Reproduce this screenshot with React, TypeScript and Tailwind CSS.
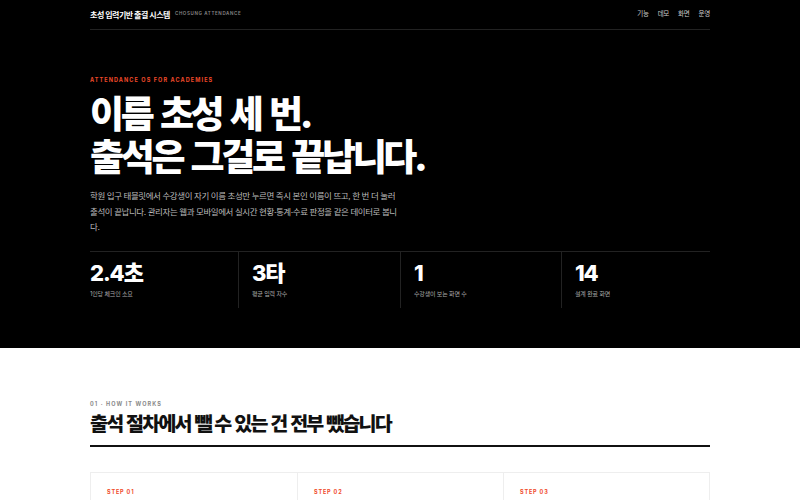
const stats = [
  { value: '2.4초', label: '1인당 체크인 소요' },
  { value: '3타', label: '평균 입력 자수' },
  { value: '1', label: '수강생이 보는 화면 수' },
  { value: '14', label: '설계 완료 화면' },
];

const steps = ['STEP 01', 'STEP 02', 'STEP 03'];

const nav = ['기능', '데모', '화면', '운영'];

export default function App() {
  return (
    <div className="min-h-screen bg-white font-['Inter','Noto_Sans_CJK_KR',sans-serif]">
      {/* Hero */}
      <section className="bg-black pb-[40px]">
        <div className="w-[620px] mx-auto">
          <header className="flex items-center justify-between h-[30px] border-b border-[#222]">
            <div className="flex items-center gap-[5px]">
              <span className="text-[8px] font-bold text-white tracking-[-0.06em]">초성 입력기반 출결 시스템</span>
              <span className="text-[4.5px] font-semibold text-[#888] tracking-[0.14em]">CHOSUNG ATTENDANCE</span>
            </div>
            <nav className="flex items-center gap-[9px]">
              {nav.map(item => (
                <span key={item} className="text-[6.5px] text-[#ccc] tracking-[-0.04em]">{item}</span>
              ))}
            </nav>
          </header>

          <p className="mt-[46px] text-[5.5px] leading-[8px] font-bold tracking-[0.2em] text-[#f04a2a]">
            ATTENDANCE OS FOR ACADEMIES
          </p>
          <h1 className="mt-[9px] text-[37px] leading-[43px] font-black text-white tracking-[-0.09em] [word-spacing:0.12em]">
            이름 초성 세 번.
            <br />
            출석은 그걸로 끝납니다.
          </h1>
          <p className="mt-[10px] w-[308px] text-[8.5px] leading-[15.5px] text-[#bbbbbb] tracking-[-0.05em]">
            학원 입구 태블릿에서 수강생이 자기 이름 초성만 누르면 즉시 본인 이름이 뜨고, 한 번 더 눌러 출석이 끝납니다. 관리자는 웹과 모바일에서 실시간 현황·통계·수료 판정을 같은 데이터로 봅니다.
          </p>

          <div className="mt-[15px] grid grid-cols-[148px_162px_161px_149px] border-t border-[#222]">
            {stats.map((s, i) => (
              <div
                key={s.value}
                className={`h-[56px] pt-[9px] ${i === 0 ? '' : 'pl-[13px] border-l border-[#222]'}`}
              >
                <div className="text-[22px] leading-[24px] font-extrabold text-white tracking-[-0.05em]">{s.value}</div>
                <div className="mt-[5px] text-[6px] leading-[8px] text-[#aaa] tracking-[-0.03em]">{s.label}</div>
              </div>
            ))}
          </div>
        </div>
      </section>

      {/* How it works */}
      <section className="bg-white">
        <div className="w-[620px] mx-auto pt-[52px]">
          <p className="text-[5.5px] leading-[8px] font-bold tracking-[0.2em] text-[#888]">01 · HOW IT WORKS</p>
          <h2 className="mt-[4px] text-[19.5px] leading-[24px] font-black text-[#111] tracking-[-0.09em] [word-spacing:0.08em]">
            출석 절차에서 뺄 수 있는 건 전부 뺐습니다
          </h2>
          <div className="mt-[9px] h-[2px] bg-[#111]" />

          <div className="mt-[25px] grid grid-cols-3 border border-[#eee]">
            {steps.map((s, i) => (
              <div key={s} className={`h-[80px] pt-[15px] px-[16px] ${i === 0 ? '' : 'border-l border-[#eee]'}`}>
                <p className="text-[5.5px] leading-[8px] font-bold tracking-[0.15em] text-[#f04a2a]">{s}</p>
              </div>
            ))}
          </div>
        </div>
      </section>
    </div>
  );
}
